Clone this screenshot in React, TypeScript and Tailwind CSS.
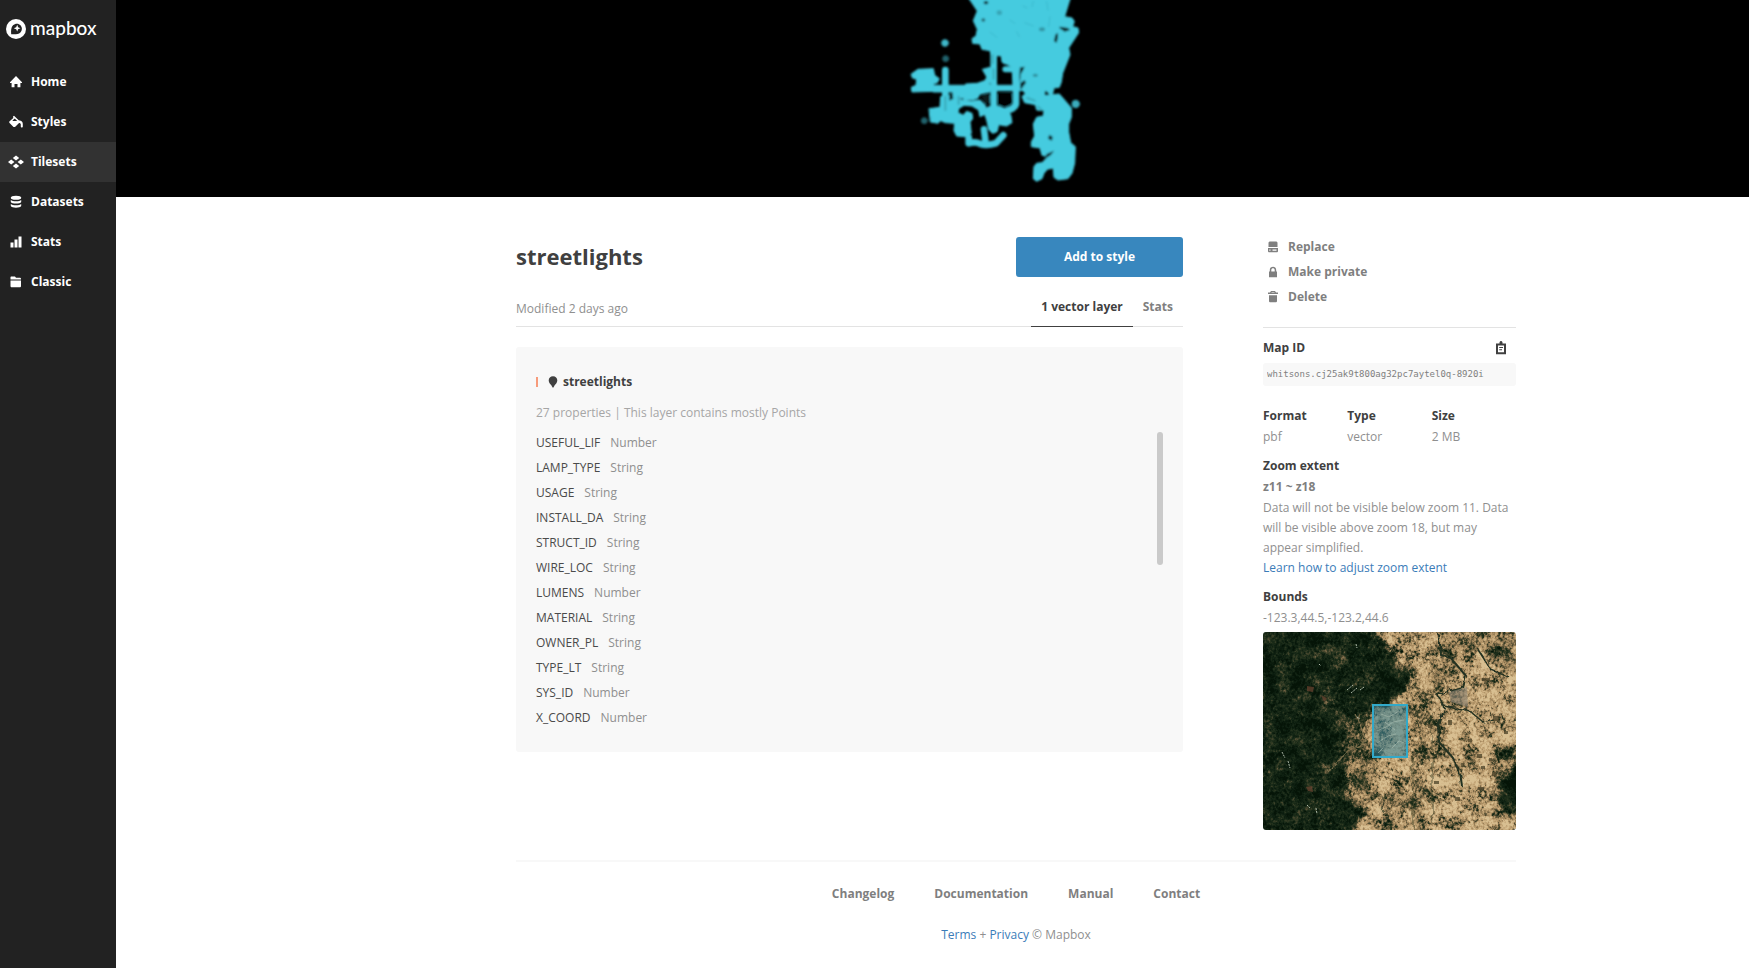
import type { ReactNode } from "react";

type IconName =
  | "home" | "paint" | "tiles" | "database" | "graph" | "folder"
  | "replace" | "lock" | "trash" | "clipboard" | "marker";

const glyphs: Record<IconName, ReactNode> = {
  home: <path d="M9 3 3 9.2V10h1.6v4.3H7.500V11h3v3.300H13.400V10H15V9.200Z" />,
  paint: (
    <>
      <path fillRule="evenodd" d="M6 3.500 7 2.700 13.300 8.800 8 14 6.500 14 2.300 9.800 2.300 8.500 6.300 5ZM7.300 5.800 5.300 7.900H10.200L8 5.800Z" />
      <path d="M11.500 7.500C14 7 15.800 8.500 15.800 11v2.800c0 .9-2 .9-2 0V11.500c0-1-.8-1.500-2-1.500Z" />
    </>
  ),
  tiles: <path d="m9 2.500 3.200 2.500L9 7.500 5.800 5ZM4.200 6.500 7.400 9l-3.200 2.500L1 9Zm9.600 0L17 9l-3.200 2.500L10.600 9ZM9 10.500l3.200 2.500L9 15.500 5.800 13Z" />,
  database: (
    <>
      <ellipse cx="9" cy="4.800" rx="5.200" ry="2" />
      <path d="M3.800 7c1.500 1.800 9 1.800 10.400 0v2c-.8 2-9.600 2-10.400 0ZM3.800 11c1.500 1.800 9 1.800 10.400 0v2c-.8 2.300-9.600 2.300-10.400 0Z" />
    </>
  ),
  graph: <path d="M3.500 9.500h3v5h-3ZM7.500 6.500h3v8h-3ZM11.500 3.500h3v11h-3Z" />,
  folder: <path d="M4 3.500h4l1 1.300h4.300l.7.700v.9H3.500V4ZM3.500 7.400H14v6.100l-.7.700H4.200l-.7-.7Z" />,
  replace: <path fillRule="evenodd" d="M5.500 3.500h7l1 1V9h-9V4.500ZM4 10h10v3.500l-.7.700H4.700L4 13.500ZM5.300 11.500v1.200h1.200v-1.200Zm3.200 0v1.200h4v-1.200Z" />,
  lock: <path fillRule="evenodd" d="M5 8.500h.8V7c0-4.400 6.400-4.400 6.400 0v1.500h.8v5.700H5ZM7.300 8.500h3.400V7c0-2.200-3.400-2.200-3.400 0Z" />,
  trash: <path fillRule="evenodd" d="M7 3h4l1 1.500h2V6H4V4.500h2ZM7.300 4.500h3.400l-.4-.6H7.700ZM5 7.300h8v6.200l-.8.800H5.800L5 13.500Z" />,
  clipboard: (
    <path fillRule="evenodd" d="M7.500 3.500C8 1.500 10 1.500 10.500 3.500V4.500H14v10.700H4V4.500h3.500ZM6 6.500v6.700h6V6.500ZM7.200 8h3.800v1H7.200Zm0 2.300H10v1H7.200Z" />
  ),
  marker: <path d="M9 3.200c2.600 0 4.300 1.800 4.300 4.200 0 2.300-1.900 3.700-2.800 5.200L9.500 14.600h-1L7.500 12.600C6.600 11.100 4.700 9.700 4.700 7.400 4.700 5 6.400 3.200 9 3.200Z" />,
};

function Icon({ name }: { name: IconName }) {
  return (
    <svg viewBox="0 0 18 18" className="h-[18px] w-[18px] shrink-0" fill="currentColor" aria-hidden="true">
      {glyphs[name]}
    </svg>
  );
}

function Logo() {
  return (
    <a href="#home" className="flex items-center gap-1 px-[6px] text-white">
      <svg viewBox="0 0 20 20" className="h-5 w-5" aria-hidden="true">
        <circle cx="10" cy="10" r="10" fill="#fff" />
        <path d="M5.200 15.200C4.900 11.500 5 8.500 7 6.300c2.200-2.200 5.600-2.200 7.500-.1 1.900 2 1.900 5.200-.1 7.200-2.200 2-5.300 2.100-9.200 1.800Z" fill="#222" />
        <path d="m11.200 5.800.9 2.500 2.400.9-2.400 1-.9 2.400-1-2.400-2.400-1 2.400-.9Z" fill="#fff" />
      </svg>
      <span className="pb-[3px] font-['Lato',sans-serif] text-[19px] leading-[17px] font-medium">mapbox</span>
    </a>
  );
}

const navigation: { label: string; icon: IconName }[] = [
  { label: "Home", icon: "home" },
  { label: "Styles", icon: "paint" },
  { label: "Tilesets", icon: "tiles" },
  { label: "Datasets", icon: "database" },
  { label: "Stats", icon: "graph" },
  { label: "Classic", icon: "folder" },
];

const properties: [string, string][] = [
  ["USEFUL_LIF", "Number"],
  ["LAMP_TYPE", "String"],
  ["USAGE", "String"],
  ["INSTALL_DA", "String"],
  ["STRUCT_ID", "String"],
  ["WIRE_LOC", "String"],
  ["LUMENS", "Number"],
  ["MATERIAL", "String"],
  ["OWNER_PL", "String"],
  ["TYPE_LT", "String"],
  ["SYS_ID", "Number"],
  ["X_COORD", "Number"],
];

const actions: { label: string; icon: IconName }[] = [
  { label: "Replace", icon: "replace" },
  { label: "Make private", icon: "lock" },
  { label: "Delete", icon: "trash" },
];

function DataPreview() {
  return (
    <svg viewBox="0 0 1633 197" preserveAspectRatio="xMidYMin slice" className="block h-[197px] w-full bg-black" role="img" aria-label="Tileset preview">
      <defs>
        <filter id="soft" x="-5%" y="-5%" width="110%" height="110%">
          <feGaussianBlur stdDeviation="2.600" />
        </filter>
      </defs>
      <g transform="translate(774 0) scale(.3333)" fill="#45cbdf" stroke="#45cbdf" strokeLinecap="round" strokeLinejoin="round" strokeWidth="3" filter="url(#soft)">
        <path d="M236-6 262 33 250 62 262 88 258 108 246 116 248 130 270 132 276 148 300 152 304 166 334 168 336 186 366 200 370 270 390 262 402 276 420 290 440 300 462 292 466 270 486 290 492 264 508 262 514 246 518 220 540 164 536 144 566 98 564 84 548 80 553 64 546 54 524 50 541-6Z" />
        <path d="M462 286 490 284 508 282 522 298 544 324 544 352 536 372 536 396 542 428 556 440 554 490 546 520 534 536 504 540 492 532 490 504 472 508 462 520 456 536 440 544 430 536 432 500 440 490 456 488 474 470 456 466 450 444 424 440 424 426 434 408 430 372 440 352 460 348 462 332 440 330 436 314 404 308 396 290 406 280 440 282Z" />
        <path d="M64 222 84 208 130 206 134 226 148 236 142 248 130 252 132 274 66 276 64 262 78 256 80 238 68 234Z" />
        <path d="M118 326 150 322 152 290 200 284 214 300 246 304 270 300 286 316 292 340 270 350 266 330 246 318 222 316 206 326 204 338 220 346 230 334 246 340 248 356 240 366 244 400 228 410 200 408 192 392 194 370 166 368 152 362 144 370 122 366Z" />
        <path d="M298 320 326 318 350 328 362 344 366 368 350 378 326 374 322 394 308 400 296 388 290 360 280 330Z" />
        <path d="M130 256H396V272H290L270 282 262 296 246 298 228 284 218 294 190 294 188 276H130Z" />
        <path d="M228 252 262 250 290 240 300 254V276L270 282 250 300 220 298Z" />
        <path d="M278 208 300 202 308 230 302 248 282 248 290 232Z" />
        <g fill="none" strokeWidth="20">
          <path d="M166 210V356M311 160V390M378 195V312Q374 326 350 332" />
          <path d="M236 412V430Q256 424 272 432 290 438 318 430L340 406M282 388 286 420" />
          <path d="M346 184H375M346 208H375" strokeWidth="18" />
        </g>
        <circle cx="165" cy="129" r="10" opacity=".9" />
        <circle cx="167" cy="176" r="9" opacity=".48" />
        <circle cx="103" cy="362" r="9" opacity=".48" />
        <circle cx="557" cy="312" r="11" opacity=".85" />
        <g fill="#0a1c1f" stroke="none">
          <ellipse cx="288" cy="8" rx="7" ry="5" />
          <path d="M510 80 534 84 540 90 524 95 516 89 508 84ZM496 104 504 98 504 112 500 128 492 124Z" />
          <path d="M390 202 404 200 398 214 392 222 390 250 404 240 408 248 392 270 388 230Z" />
          <path d="M478 404 488 410 486 422 474 416ZM470 462 492 452 482 466 462 478Z" />
          <path d="M274 288 296 282 300 290 298 310 286 312 280 300ZM178 282 188 280 190 296 178 302Z" />
          <path d="M324 282 366 280 368 308 350 320 324 314Z" fill="#000" />
          <ellipse cx="280" cy="60" rx="6" ry="5" opacity=".6" />
          <ellipse cx="328" cy="38" rx="8" ry="7" opacity=".22" />
          <ellipse cx="456" cy="88" rx="9" ry="6" opacity=".3" />
          <ellipse cx="436" cy="226" rx="8" ry="5" opacity=".35" />
        </g>
        <path d="M412 294 434 302M444 320 458 332M311 208V236M166 290V330M308 166V190M206 290V312" fill="none" stroke="#0a1c1f" strokeWidth="6" opacity=".2" />
        <path d="M398 18 412 24M360 60 374 70M470 5 474 30M404 68 430 78M300 96 320 112M430 4 426 20M480 50 476 80M380 95 388 110" fill="none" stroke="#36a6b8" strokeWidth="3" opacity=".5" />
      </g>
    </svg>
  );
}

function BoundsMap() {
  return (
    <svg viewBox="0 0 253 198" preserveAspectRatio="xMidYMid slice" className="block w-full rounded-[3px]" role="img" aria-label="Map of the tileset bounds">
      <defs>
        <filter id="terrain" x="0" y="0" width="100%" height="100%" colorInterpolationFilters="sRGB">
          <feGaussianBlur in="SourceGraphic" stdDeviation="4" result="soft" />
          <feTurbulence type="fractalNoise" baseFrequency=".07" numOctaves="4" seed="4" result="warp" />
          <feDisplacementMap in="soft" in2="warp" scale="22" xChannelSelector="R" yChannelSelector="G" result="base" />
          <feTurbulence type="fractalNoise" baseFrequency=".37 .33" numOctaves="4" seed="21" result="n" />
          <feColorMatrix in="n" type="matrix" values=".6 .4 0 0 0  .6 .4 0 0 0  .6 .4 0 0 0  0 0 0 0 1" result="fine" />
          <feColorMatrix in="warp" type="matrix" values="0 0 1 0 0  0 0 1 0 0  0 0 1 0 0  0 0 0 0 1" result="coarse" />
          <feComposite in="fine" in2="coarse" operator="arithmetic" k2=".75" k3=".6" k4="-.175" result="noise" />
          <feComposite in="base" in2="noise" operator="arithmetic" k1="1.800" k2=".1" k3=".75" k4="-.375" result="mix" />
          <feComponentTransfer in="mix">
            <feFuncR type="table" tableValues=".02 .06 .13 .28 .48 .66 .75 .80 .85" />
            <feFuncG type="table" tableValues=".08 .13 .19 .28 .41 .55 .63 .69 .75" />
            <feFuncB type="table" tableValues=".03 .07 .11 .18 .28 .38 .45 .51 .57" />
            <feFuncA type="linear" slope="0" intercept="1" />
          </feComponentTransfer>
        </filter>
        <filter id="rough">
          <feTurbulence type="fractalNoise" baseFrequency=".12" numOctaves="3" seed="4" />
          <feDisplacementMap in="SourceGraphic" scale="7" />
        </filter>
      </defs>
      <g filter="url(#terrain)">
        <rect x="-20" y="-20" width="300" height="240" fill="#b8b8b8" />
        <path d="M-20-20H112V0L124 14 132 25 150 38 146 52 128 66 112 76 102 94 88 108 80 135 86 160 102 178 88 220H-20Z" fill="#232323" />
        <path d="M50 45 80 62 96 100 78 118 70 140 58 198H28L64 136 80 112 58 82ZM64 0 92 20 76 40 60 30Z" fill="#323232" />
        <path d="M132 46 146 38 148 56 130 68 110 78 108 60Z" fill="#101010" />
        <path d="M172-20H235L260 12V40L225 34 214 18 198 22 190 48 170 60 145 82 144 62 170 44Z" fill="#808080" />
        <path d="M232 148 270 126V190L238 178Z" fill="#171717" />
        <path d="M236 120 247 115 250 126 244 134Z" fill="#181818" />
        <path d="M112 130 122 140 119 220H128L138 175 148 182 150 105 158 92 146 82 170 76 172 130 160 168 162 220H146L148 160 130 160Z" fill="#737373" />
        <path d="M80 95 106 80 118 130 108 170 94 162 84 130Z" fill="#666" />
        <path d="M190 60 204 56 203 74 186 78Z" fill="#777" />
        <path d="M118 128H132V160H118ZM156 130H174V150H156Z" fill="#cacaca" />
      </g>
      <g filter="url(#rough)" fill="none" stroke="#243020">
        <path d="M176 2 178 23 188 26 203 44 200 56 175 63 181 75 175 92 176 110 190 126 197 140 199 154" strokeWidth="2" />
        <path d="M181 74 208 80 220 90 230 87M214 16 228 38 246 45" strokeWidth="1.500" />
        <path d="M150 125 150 198M120 164 121 198M169 80V193" strokeWidth="1.200" opacity=".6" />
        <path d="M65 140 78 124 92 114 104 108" stroke="#786c49" strokeWidth="1.500" />
        <path d="M92 82 97 92 103 110" stroke="#8b7954" />
      </g>
      <path d="M186 60 204 55 205 75 188 70Z" fill="#8a8475" opacity=".6" />
      <path d="M230 84h6v5h-6ZM165 92h4v4h-4ZM218 134h4v3h-4ZM214 122h5v4h-5ZM229 140h4v4h-4ZM198 131h3v4h-3ZM219 46h8v3h-8ZM185 88h4v5h-4ZM205 107h4v3h-4ZM226 126h3v3h-3ZM241 99h4v3h-4ZM215 155h6v3h-6ZM171 149h5v3h-5ZM192 165h5v4h-5Z" fill="#4b4329" opacity=".75" />
      <path d="M84 58 90 53M88 61 94 56M97 58 101 55M19 120 22 126M25 129 27 136M44 173 47 176M53 176 54 182M93 12 94 16M56 32 58 34M94 85 97 87" stroke="#aeb9a8" strokeDasharray="2 1" />
      <path d="M44 54 51 55 50 60 44 59ZM58 63 64 66 61 70ZM43 155 49 154 50 160 45 159Z" fill="#67422f" opacity=".75" />
      <rect x="110" y="73" width="34" height="52" fill="#3b7f92" fillOpacity=".58" stroke="#32a9c9" strokeWidth="2" />
      <path d="M114 99 123 95 130 90 141 88M114 111 125 104 133 102M118 82 126 85 136 79M129 116 136 109 141 111M115 121 120 116M122 90 132 98" fill="none" stroke="#b3c6b8" opacity=".5" />
    </svg>
  );
}

const footerLinks = ["Changelog", "Documentation", "Manual", "Contact"];

export default function App() {
  return (
    <div className="flex min-h-screen bg-white font-['Open_Sans',sans-serif] text-[12px] leading-5 text-[#7f7f7f]">
      <aside className="w-[116px] shrink-0 bg-[#222] pt-[19px]">
        <Logo />
        <nav className="mt-[23px]" aria-label="Main">
          {navigation.map(({ label, icon }) => (
            <a
              key={label}
              href={`#${label.toLowerCase()}`}
              aria-current={label === "Tilesets" ? "page" : undefined}
              className="flex h-10 items-center gap-[6px] pl-[7px] font-bold text-white aria-[current=page]:bg-[#323232]"
            >
              <Icon name={icon} />
              {label}
            </a>
          ))}
        </nav>
      </aside>

      <div className="min-w-0 flex-1">
        <DataPreview />
        <div className="flex justify-center pl-[167px]">
          <div className="w-full max-w-[1000px]">
            <div className="flex gap-20 pt-10">
              <main className="min-w-0 flex-1">
                <header className="flex items-center justify-between">
                  <h1 className="pb-[2px] text-[22px] font-bold text-[#404040]">streetlights</h1>
                  <button type="button" className="h-10 w-[167px] rounded-[3px] bg-[#3887be] font-bold text-white">
                    Add to style
                  </button>
                </header>
                <div className="mt-[10px] flex h-10 items-center justify-between border-b border-[#e3e3e3]">
                  <p className="pt-1 text-[#8f8f8f]">Modified 2 days ago</p>
                  <div className="flex" role="tablist">
                    <button type="button" role="tab" aria-selected="true" className="-mb-px h-10 border-b border-[#404040] px-[10px] pt-[2px] font-bold text-[#404040]">
                      1 vector layer
                    </button>
                    <button type="button" role="tab" aria-selected="false" className="h-10 px-[10px] pt-px font-bold">
                      Stats
                    </button>
                  </div>
                </div>

                <section className="mt-5 rounded-[3px] bg-[#f8f8f8] px-5 pt-[25px] pb-[22px]">
                  <h2 className="flex items-center gap-[6px] font-bold text-[#404040]">
                    <span className="h-[10px] w-[2px] bg-[#f79b7b]" />
                    <span className="flex items-center gap-px">
                      <Icon name="marker" />
                      streetlights
                    </span>
                  </h2>
                  <p className="mt-[11px] text-[#a6a6a6]">27 properties | This layer contains mostly Points</p>
                  <div className="relative mt-[7px]">
                    <ul>
                      {properties.map(([name, type]) => (
                        <li key={name} className="flex h-[25px] items-center gap-[10px]">
                          <span className="text-[#4a4a4a]">{name}</span>
                          <span className="text-[#8f8f8f]">{type}</span>
                        </li>
                      ))}
                    </ul>
                    <div className="absolute top-[2px] right-0 h-[133px] w-[6px] rounded-full bg-[#cacaca]" />
                  </div>
                </section>
              </main>

              <aside className="w-[253px] shrink-0">
                <div className="flex flex-col items-start gap-[5px] font-bold">
                  {actions.map(({ label, icon }) => (
                    <button key={label} type="button" className="flex h-5 items-center gap-[6px] pl-px">
                      <Icon name={icon} />
                      {label}
                    </button>
                  ))}
                </div>
                <div className="mt-5 border-t border-[#e3e3e3] pt-[10px]">
                  <div className="flex items-center justify-between pr-[6px] text-[#404040]">
                    <label htmlFor="map-id" className="font-bold">Map ID</label>
                    <button type="button" aria-label="Copy map ID">
                      <Icon name="clipboard" />
                    </button>
                  </div>
                  <input
                    id="map-id"
                    readOnly
                    value="whitsons.cj25ak9t800ag32pc7aytel0q-8920i"
                    className="mt-[5px] block h-[23px] w-full rounded-[3px] bg-[#f8f8f8] px-1 pb-[2px] font-['DejaVu_Sans_Mono',monospace] text-[9px]"
                  />
                </div>
                <dl className="mt-5 grid grid-cols-3">
                  {[["Format", "pbf"], ["Type", "vector"], ["Size", "2 MB"]].map(([term, value]) => (
                    <div key={term}>
                      <dt className="font-bold text-[#404040]">{term}</dt>
                      <dd className="mt-px text-[#8f8f8f]">{value}</dd>
                    </div>
                  ))}
                </dl>
                <section className="mt-[9px]">
                  <h3 className="font-bold text-[#404040]">Zoom extent</h3>
                  <p className="mt-px font-bold">z11 ~ z18</p>
                  <p className="mt-px text-[#8f8f8f]">
                    Data will not be visible below zoom 11. Data will be visible above zoom 18, but may appear simplified.
                  </p>
                  <a href="#zoom-extent" className="text-[#3b7cb8]">Learn how to adjust zoom extent</a>
                </section>
                <section className="mt-[9px]">
                  <h3 className="font-bold text-[#404040]">Bounds</h3>
                  <p className="mt-px mb-1 text-[#8f8f8f]">-123.3,44.5,-123.2,44.6</p>
                  <BoundsMap />
                </section>
              </aside>
            </div>

            <footer className="mt-[30px] border-t-2 border-[#f8f8f8] pt-[22px] text-center">
              <nav className="flex justify-center gap-10 font-bold" aria-label="Footer">
                {footerLinks.map((label) => (
                  <a key={label} href={`#${label.toLowerCase()}`}>{label}</a>
                ))}
              </nav>
              <p className="mt-[21px] text-[#8f8f8f]">
                <a href="#terms" className="text-[#3b7cb8]">Terms</a> +{" "}
                <a href="#privacy" className="text-[#3b7cb8]">Privacy</a> © Mapbox
              </p>
            </footer>
          </div>
        </div>
      </div>
    </div>
  );
}
